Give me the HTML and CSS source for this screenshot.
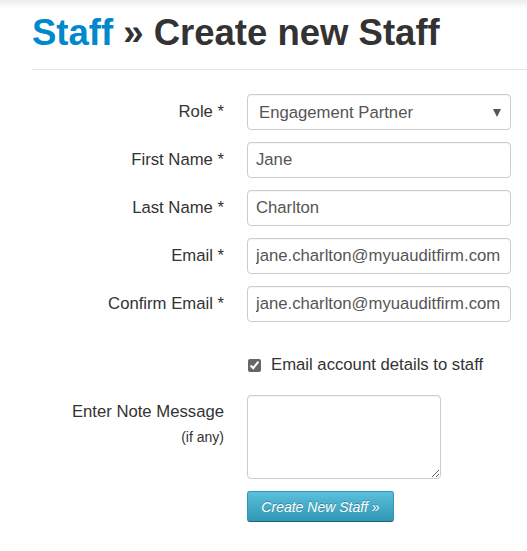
FILE: index.html
```html
<!DOCTYPE html>
<html lang="en">
<head>
    <meta charset="UTF-8">
    <title>Staff » Create new Staff</title>
    <link rel="stylesheet" href="styles.css">
</head>
<body>
    <div class="top-shade"></div>

    <div class="page">
        <h1 class="page-title"><a href="#">Staff</a> » Create new Staff</h1>
        <hr class="divider">

        <form class="staff-form">
            <div class="form-row">
                <label for="role">Role *</label>
                <div class="select-wrap">
                    <select id="role">
                        <option>Engagement Partner</option>
                    </select>
                </div>
            </div>
            <div class="form-row">
                <label for="firstName">First Name *</label>
                <input id="firstName" type="text" value="Jane">
            </div>
            <div class="form-row">
                <label for="lastName">Last Name *</label>
                <input id="lastName" type="text" value="Charlton">
            </div>
            <div class="form-row">
                <label for="email">Email *</label>
                <input id="email" type="text" value="jane.charlton@myuauditfirm.com">
            </div>
            <div class="form-row">
                <label for="confirmEmail">Confirm Email *</label>
                <input id="confirmEmail" type="text" value="jane.charlton@myuauditfirm.com">
            </div>

            <div class="form-row check-row">
                <span></span>
                <label class="check-label"><input type="checkbox" checked> Email account details to staff</label>
            </div>

            <div class="form-row note-row">
                <label for="note">Enter Note Message<small>(if any)</small></label>
                <textarea id="note"></textarea>
            </div>

            <div class="form-row action-row">
                <span></span>
                <div><button type="button" class="btn-info">Create New Staff »</button></div>
            </div>
        </form>
    </div>
</body>
</html>
```

FILE: styles.css
```css
body {
    font-family: 'Liberation Sans', Arial, sans-serif;
    margin: 0;
    padding: 0;
    background: #fff;
    color: #333;
}

.top-shade {
    height: 9px;
    background: linear-gradient(#ececec, #fff);
}

.page {
    padding-left: 32px;
}

.page-title {
    margin: 3px 0 0;
    font-size: 36.5px;
    line-height: 42px;
    font-weight: bold;
    color: #333;
}

.page-title a {
    color: #0088cc;
    text-decoration: none;
}

.divider {
    margin: 15px 0 0;
    border: none;
    border-top: 1px solid #e5e5e5;
}

.staff-form {
    padding-top: 24px;
}

.form-row {
    display: grid;
    grid-template-columns: 192px 264px;
    column-gap: 23px;
    align-items: center;
    margin-bottom: 12px;
}

.form-row > label {
    text-align: right;
    font-size: 16.7px;
    color: #333;
}

input[type="text"],
select,
textarea {
    box-sizing: border-box;
    width: 264px;
    height: 36px;
    margin: 0;
    padding: 6px 4px 6px 8px;
    font-family: inherit;
    font-size: 16.7px;
    color: #555;
    background: #fff;
    border: 1px solid #ccc;
    border-radius: 4px;
    box-shadow: inset 0 1px 1px rgba(0, 0, 0, 0.04);
}

.select-wrap {
    position: relative;
}

select {
    padding-left: 11px;
    appearance: none;
    -webkit-appearance: none;
}

.select-wrap::after {
    content: '';
    position: absolute;
    right: 10px;
    top: 15px;
    border-left: 4px solid transparent;
    border-right: 4px solid transparent;
    border-top: 8px solid #555;
    pointer-events: none;
}

.check-row {
    margin-top: 33px;
    margin-bottom: 20px;
}

.check-label {
    display: flex;
    align-items: center;
    gap: 10px;
    font-size: 16.7px;
    color: #333;
    white-space: nowrap;
}

.check-label input {
    margin: 0 0 0 1px;
    width: 13px;
    height: 13px;
    accent-color: #666;
}

.note-row {
    align-items: start;
}

.note-row > label {
    padding-top: 8px;
    line-height: 18px;
}

.note-row small {
    display: block;
    margin-top: 7px;
    font-size: 14px;
}

textarea {
    width: 194px;
    height: 84px;
    resize: vertical;
}

.action-row {
    margin-top: 0;
}

.btn-info {
    width: 147px;
    height: 31px;
    padding: 0;
    font-family: inherit;
    font-size: 14px;
    font-style: italic;
    color: #fff;
    text-shadow: 0 -1px 0 rgba(0, 0, 0, 0.25);
    background: linear-gradient(#5bc0de, #2f96b4);
    border: 1px solid #2f96b4;
    border-bottom-color: #1f6377;
    border-radius: 3px;
    cursor: pointer;
}
```
